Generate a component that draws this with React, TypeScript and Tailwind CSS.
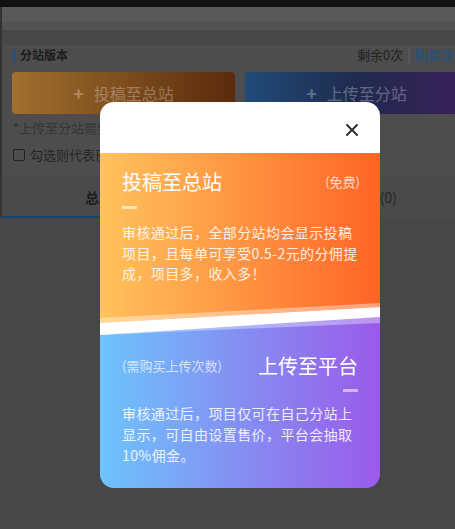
import React from 'react';

const font = { fontFamily: '"Noto Sans CJK SC", "Noto Sans", sans-serif' };

const Divider = () => (
  <svg width="280" height="34" viewBox="0 0 280 34" className="block">
    <defs>
      <linearGradient id="og" x1="0" y1="0" x2="280" y2="0" gradientUnits="userSpaceOnUse">
        <stop offset="0" stopColor="#ffc35d" />
        <stop offset="1" stopColor="#ff6426" />
      </linearGradient>
      <linearGradient id="pg" x1="0" y1="0" x2="280" y2="0" gradientUnits="userSpaceOnUse">
        <stop offset="0" stopColor="#6dc4fc" />
        <stop offset="1" stopColor="#9b5ae9" />
      </linearGradient>
    </defs>
    <rect x="0" y="0" width="280" height="34" fill="url(#pg)" />
    <polygon points="0,0 280,0 280,21 0,33" fill="#ffffff" fillOpacity="0.35" />
    <polygon points="0,0 280,0 280,15 0,33" fill="#ffffff" />
    <polygon points="0,0 280,0 280,5 0,21" fill="url(#og)" />
    <polygon points="0,16 280,1 280,5 0,21" fill="#ffffff" fillOpacity="0.4" />
  </svg>
);

const UploadModal = () => (
  <div className="absolute left-[100px] top-[102px] w-[280px] rounded-[14px] overflow-hidden">
    {/* header */}
    <div className="h-[51px] bg-white flex justify-end items-start pt-[22px] pr-[22px]">
      <svg width="12" height="12" viewBox="0 0 12 12">
        <path d="M1 1 L11 11 M11 1 L1 11" stroke="#2b2b2b" strokeWidth="1.8" strokeLinecap="round" />
      </svg>
    </div>

    {/* 投稿至总站 */}
    <div className="h-[149px] bg-[linear-gradient(to_right,#ffc35d,#ff6426)] pl-[22px] pr-[20px] pt-[15px] text-white">
      <div className="flex items-center justify-between">
        <span className="text-[20px] leading-[28px]">投稿至总站</span>
        <span className="text-[13px] leading-[18px] text-white/75">(免费)</span>
      </div>
      <div className="mt-[10px] h-[3px] w-[15px] bg-white/60" />
      <p className="mt-[13px] text-[14px] leading-[20.5px] tracking-[0.4px] text-white/85">
        审核通过后，全部分站均会显示投稿<br />
        项目，且每单可享受0.5-2元的分佣提<br />
        成，项目多，收入多！
      </p>
    </div>

    <Divider />

    {/* 上传至平台 */}
    <div className="h-[152px] bg-[linear-gradient(to_right,#6dc4fc,#9b5ae9)] pl-[22px] pr-[22px] pt-[16px] text-white">
      <div className="flex items-center justify-between">
        <span className="text-[13px] leading-[18px] text-white/70">(需购买上传次数)</span>
        <span className="text-[20px] leading-[28px]">上传至平台</span>
      </div>
      <div className="mt-[9px] ml-auto h-[3px] w-[15px] bg-white/55" />
      <p className="mt-[11px] text-[14px] leading-[21px] tracking-[0.4px] text-white/85">
        审核通过后，项目仅可在自己分站上<br />
        显示，可自由设置售价，平台会抽取<br />
        10%佣金。
      </p>
    </div>
  </div>
);

export default function App() {
  return (
    <div className="relative w-[455px] h-[529px] overflow-hidden bg-[#474747]" style={font}>
      <div className="h-[7px] bg-[#111111]" />
      <div className="border-l-2 border-[#333333]">
        <div className="h-[15px] bg-[#595959]" />
        <div className="h-[8px] bg-[#525252]" />

        {/* dimmed page content */}
        <div className="bg-[#4d4d4d] pl-[11px] pb-[14px]">
          <div className="mt-[15px] h-[20px] flex items-center">
            <div className="w-[344px] shrink-0 flex items-center gap-[5px]">
              <span className="w-[2px] h-[11px] bg-[#1d5287]" />
              <span className="text-[12px] font-bold text-[#1c1c1c]">分站版本</span>
            </div>
            <div className="flex items-center text-[13px] whitespace-nowrap">
              <span className="text-[#1f1f1f]">剩余0次</span>
              <span className="mx-[4px] text-[#666666]">|</span>
              <span className="text-[#17548c]">购买次数</span>
            </div>
          </div>

          <div className="mt-[7px] -ml-[1px] flex gap-[10px] overflow-hidden">
            <div className="w-[223px] h-[42px] shrink-0 rounded-[4px] bg-[linear-gradient(to_right,#a0702f,#5a2a0c)] flex items-center justify-center gap-[10px] text-[16px] text-white/30">
              <span className="text-[18px] font-bold">+</span>
              <span>投稿至总站</span>
            </div>
            <div className="w-[223px] h-[42px] shrink-0 rounded-l-[4px] bg-[linear-gradient(to_right,#1f4b78,#202a4e,#3a1f5a)] flex items-center justify-center gap-[10px] text-[16px] text-white/30">
              <span className="text-[18px] font-bold">+</span>
              <span>上传至分站</span>
            </div>
          </div>

          <div className="mt-[6px] text-[13px] leading-[16px] text-[#353535] whitespace-nowrap">*上传至分站需要购买上传次数</div>

          <div className="mt-[11px] h-[16px] flex items-center gap-[5px]">
            <span className="w-[12px] h-[12px] border border-[#222222] rounded-[2px]" />
            <span className="text-[13px] text-[#262626] whitespace-nowrap">勾选则代表已阅读并同意</span>
          </div>
        </div>

        {/* tabs */}
        <div className="relative h-[41px] bg-[#4a4a4a] flex">
          <div className="w-[226px] flex items-center pl-[83px] text-[14px] font-bold text-[#1c1c1c]">总站投稿(0)</div>
          <div className="flex-1 flex items-center justify-end pr-[58px] text-[14px] text-[#262626]">分站上传(0)</div>
          <div className="absolute left-0 bottom-0 w-[226px] h-[2px] bg-[#16426b]" />
        </div>
      </div>

      <UploadModal />
    </div>
  );
}
